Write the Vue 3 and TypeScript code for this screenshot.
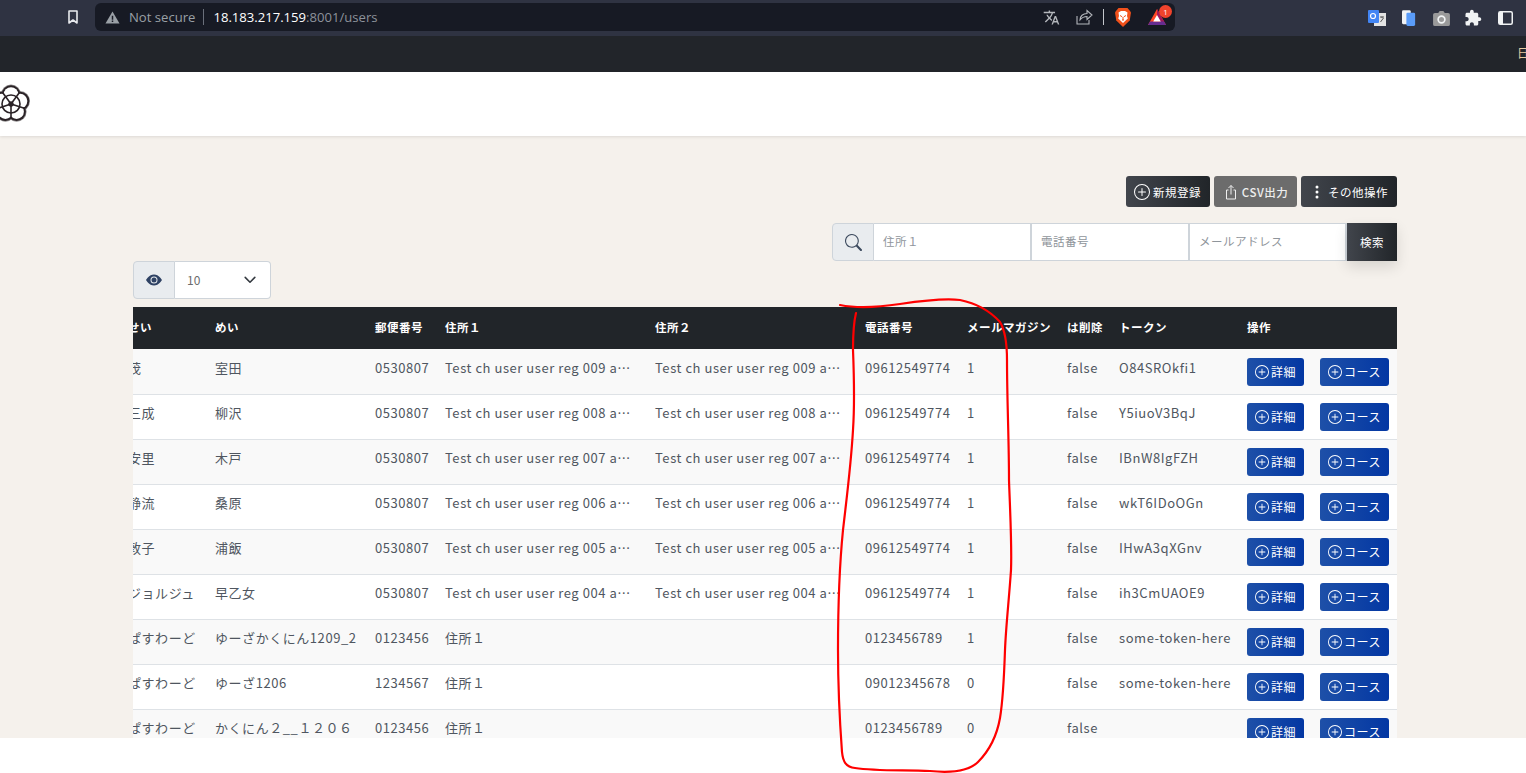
<template>
  <div class="page">
    <div class="browser-bar">
      <svg class="bookmark" viewBox="0 0 16 16" width="16" height="16"><path d="M4 2h8v12l-4-3-4 3z" fill="none" stroke="#e8eaed" stroke-width="1.6" stroke-linejoin="round" /></svg>
      <div class="omnibox">
        <svg viewBox="0 0 16 16" width="15" height="15"><path d="M8 1.5 15.5 14.5H.5zM7.2 6v4.4h1.6V6zM7.2 11.2v1.6h1.6v-1.6z" fill="#9aa0a6" fill-rule="evenodd" /></svg>
        <span class="not-secure">Not secure</span>
        <span class="omni-line"></span>
        <span class="url">18.183.217.159<span class="url-dim">:8001/users</span></span>
        <div class="omni-right">
          <svg viewBox="0 0 24 24" width="17" height="17"><path fill="#b4b7bc" d="M12.87 15.07l-2.54-2.51.03-.03c1.74-1.94 2.98-4.17 3.71-6.53H17V4h-7V2H8v2H1v1.99h11.17C11.5 7.92 10.44 9.75 9 11.35 8.07 10.32 7.3 9.19 6.69 8h-2c.73 1.63 1.73 3.17 2.98 4.56l-5.09 5.02L4 19l5-5 3.11 3.11.76-2.04zM18.5 10h-2L12 22h2l1.12-3h4.75L21 22h2l-4.5-12zm-2.62 7l1.62-4.33L19.12 17h-3.24z" /></svg>
          <svg viewBox="0 0 18 18" width="18" height="18" class="share"><path d="M2 8v8h12v-4M5 12c0-4 3-6.500 7-6.500V2.500l5 4.500-5 4.500V8.500c-3 0-5 1-7 3.500z" fill="none" stroke="#b4b7bc" stroke-width="1.100" /></svg>
          <span class="omni-line tall"></span>
          <svg viewBox="0 0 16 19" width="16" height="19" class="lion">
            <path d="M3.500 0h9L15 3l1 1.500-1.300 8L8 19 1.300 12.500 0 4.500 1 3z" fill="#f1511b" />
            <path d="M3.500 4.500 6 3h4l2.500 1.500L12 8l.8 2.500L8 15l-4.800-4.500L4 8z" fill="#fff" />
            <path d="M5 7.500 7.200 8.800M11 7.500 8.800 8.800M7 12h2M8 9v3" stroke="#f1511b" stroke-width="1" fill="none" />
          </svg>
          <div class="bat">
            <svg viewBox="0 0 18 16" width="18" height="16">
              <path d="M9 0 18 16H0z" fill="#ff4724" />
              <path d="M9 0 18 16H14L9 7z" fill="#a3195b" />
              <path d="M0 16H18L16 12.500H2z" fill="#662d91" />
              <path d="M9 6 12.800 12.500H5.200z" fill="#fff" />
            </svg>
            <span class="bat-badge">1</span>
          </div>
        </div>
      </div>
      <div class="ext-icons">
        <span class="ext">
          <svg viewBox="0 0 18 18" width="18" height="18">
            <rect x="6" y="4" width="12" height="13" fill="#e3e3e3" />
            <rect x="0" y="1" width="11" height="13" rx="1" fill="#4285f4" />
            <circle cx="5" cy="7" r="2.500" fill="none" stroke="#fff" stroke-width="1.200" />
            <path d="M12 8h4M14 7.500v1.500M12.500 13l3-4" stroke="#555" stroke-width="1" />
          </svg>
        </span>
        <span class="ext">
          <svg viewBox="0 0 16 18" width="14" height="16">
            <rect x="0" y="0" width="10" height="16" rx="1.500" fill="#f1f3f4" />
            <rect x="5" y="3" width="10" height="15" rx="1.500" fill="#5a9cf8" />
          </svg>
        </span>
        <span class="ext">
          <svg viewBox="0 0 18 16" width="17" height="15">
            <path d="M5.500 2 7 0h4l1.500 2H16a2 2 0 0 1 2 2v10a2 2 0 0 1-2 2H2a2 2 0 0 1-2-2V4a2 2 0 0 1 2-2z" fill="#9a9a9a" />
            <circle cx="9" cy="9" r="3.600" fill="none" stroke="#f1f3f4" stroke-width="1.800" />
          </svg>
        </span>
        <span class="ext">
          <svg viewBox="0 0 24 24" width="18" height="18"><path fill="#f1f3f4" d="M20.500 11H19V7c0-1.100-.9-2-2-2h-4V3.500C13 2.120 11.880 1 10.500 1S8 2.120 8 3.500V5H4c-1.100 0-1.990.9-1.990 2v3.800H3.500c1.490 0 2.700 1.210 2.700 2.700s-1.210 2.700-2.700 2.700H2V20c0 1.100.9 2 2 2h3.800v-1.500c0-1.490 1.210-2.700 2.700-2.700 1.490 0 2.700 1.210 2.700 2.700V22H17c1.100 0 2-.9 2-2v-4h1.500c1.380 0 2.500-1.120 2.500-2.500S21.880 11 20.500 11z" /></svg>
        </span>
        <span class="ext">
          <svg viewBox="0 0 15 14" width="15" height="14">
            <rect x=".75" y=".75" width="13.500" height="12.500" rx="1.500" fill="none" stroke="#f1f3f4" stroke-width="1.500" />
            <rect x="1" y="1" width="4" height="12" fill="#f1f3f4" />
          </svg>
        </span>
      </div>
    </div>

    <div class="bookmarks-bar"><span class="bookmark-glyph">日</span></div>

    <header class="app-header">
      <svg class="logo" viewBox="0 0 40 40" width="40" height="40">
        <!-- scalloped outline: grey halo, dark ring, then white to hide the overlaps -->
        <g fill="#8d8a8b">
          <circle v-for="p in petals" :key="p.x" :cx="p.x" :cy="p.y" r="10" />
        </g>
        <g fill="#2a2226">
          <circle v-for="p in petals" :key="p.x" :cx="p.x" :cy="p.y" r="9.300" />
        </g>
        <g fill="#fff">
          <circle v-for="p in petals" :key="p.x" :cx="p.x" :cy="p.y" r="7.300" />
        </g>
        <g fill="none" stroke="#2a2226" stroke-width="1.600">
          <circle cx="20" cy="20" r="9" />
          <path v-for="l in petalLines" :key="l" :d="l" />
        </g>
        <circle cx="20" cy="20" r="2.600" fill="#2a2226" />
      </svg>
    </header>

    <main class="content">
      <div class="actions">
        <button class="btn-dark btn-new">
          <svg viewBox="0 0 16 16" width="16" height="16" fill="currentColor"><path d="M8 15A7 7 0 1 1 8 1a7 7 0 0 1 0 14zm0 1A8 8 0 1 0 8 0a8 8 0 0 0 0 16z" /><path d="M8 4a.5.5 0 0 1 .5.5v3h3a.5.5 0 0 1 0 1h-3v3a.5.5 0 0 1-1 0v-3h-3a.5.5 0 0 1 0-1h3v-3A.5.5 0 0 1 8 4z" /></svg>
          新規登録
        </button>
        <button class="btn-dark btn-muted">
          <svg viewBox="0 0 16 16" width="16" height="16" fill="none" stroke="currentColor"><path d="M5.500 6H3.500v9h9V6h-2M8 10.500V1.500M5.500 4 8 1.500 10.500 4" /></svg>
          CSV出力
        </button>
        <button class="btn-dark btn-more">
          <svg viewBox="0 0 16 16" width="16" height="16" fill="currentColor"><path d="M9.500 13a1.500 1.500 0 1 1-3 0 1.500 1.500 0 0 1 3 0zm0-5a1.500 1.500 0 1 1-3 0 1.500 1.500 0 0 1 3 0zm0-5a1.500 1.500 0 1 1-3 0 1.500 1.500 0 0 1 3 0z" /></svg>
          その他操作
        </button>
      </div>

      <div class="search-row">
        <div class="search-group">
          <span class="addon addon-search">
            <svg viewBox="0 0 16 16" width="17" height="17" fill="#3c4a5e"><path d="M11.742 10.344a6.500 6.500 0 1 0-1.397 1.398h-.001c.03.04.062.078.098.115l3.850 3.850a1 1 0 0 0 1.415-1.414l-3.850-3.850a1.007 1.007 0 0 0-.115-.1zM12 6.500a5.500 5.500 0 1 1-11 0 5.500 5.500 0 0 1 11 0z" /></svg>
          </span>
          <input class="search-input" placeholder="住所１" />
          <input class="search-input" placeholder="電話番号" />
          <input class="search-input last" placeholder="メールアドレス" />
          <button class="btn-search">検索</button>
        </div>
      </div>

      <div class="per-page">
        <span class="addon addon-eye">
          <svg viewBox="0 0 16 16" width="16" height="16" fill="#2f4264"><path d="M10.500 8a2.500 2.500 0 1 1-5 0 2.500 2.500 0 0 1 5 0z" /><path d="M0 8s3-5.500 8-5.500S16 8 16 8s-3 5.500-8 5.500S0 8 0 8zm8 3.500a3.500 3.500 0 1 0 0-7 3.500 3.500 0 0 0 0 7z" /></svg>
        </span>
        <div class="per-page-select">
          <span class="per-page-value">10</span>
          <svg viewBox="0 0 16 16" width="14" height="14" fill="none" stroke="#343a40" stroke-width="1.800" stroke-linecap="round" stroke-linejoin="round"><path d="m2.500 5 5.500 5.500L13.500 5" /></svg>
        </div>
      </div>

      <div class="table-wrap">
        <table class="users">
          <colgroup>
            <col v-for="w in colWidths" :key="w.id" :style="{ width: w.px + 'px' }" />
          </colgroup>
          <thead>
            <tr>
              <th v-for="h in headers" :key="h">{{ h }}</th>
            </tr>
          </thead>
          <tbody>
            <tr v-for="u in users" :key="u.mei">
              <td>{{ u.sei }}</td>
              <td>{{ u.mei }}</td>
              <td>{{ u.zip }}</td>
              <td class="clip">{{ u.addr1 }}</td>
              <td class="clip">{{ u.addr2 }}</td>
              <td>{{ u.tel }}</td>
              <td>{{ u.mag }}</td>
              <td>false</td>
              <td>{{ u.token }}</td>
              <td>
                <div class="row-actions">
                  <button class="btn-blue">
                    <svg viewBox="0 0 16 16" width="14" height="14" fill="currentColor"><path d="M8 15A7 7 0 1 1 8 1a7 7 0 0 1 0 14zm0 1A8 8 0 1 0 8 0a8 8 0 0 0 0 16z" /><path d="M8 4a.5.5 0 0 1 .5.5v3h3a.5.5 0 0 1 0 1h-3v3a.5.5 0 0 1-1 0v-3h-3a.5.5 0 0 1 0-1h3v-3A.5.5 0 0 1 8 4z" /></svg>
                    詳細
                  </button>
                  <button class="btn-blue">
                    <svg viewBox="0 0 16 16" width="14" height="14" fill="currentColor"><path d="M8 15A7 7 0 1 1 8 1a7 7 0 0 1 0 14zm0 1A8 8 0 1 0 8 0a8 8 0 0 0 0 16z" /><path d="M8 4a.5.5 0 0 1 .5.5v3h3a.5.5 0 0 1 0 1h-3v3a.5.5 0 0 1-1 0v-3h-3a.5.5 0 0 1 0-1h3v-3A.5.5 0 0 1 8 4z" /></svg>
                    コース
                  </button>
                </div>
              </td>
            </tr>
          </tbody>
        </table>
      </div>
    </main>

    <!-- hand drawn marker on top of the screenshot -->
    <svg class="marker" viewBox="0 0 1526 773" width="1526" height="773" fill="none" stroke="#f00" stroke-width="2.200" stroke-linecap="round" stroke-linejoin="round">
      <path d="M840 305C860 309 880 307 900 304C920 301 945 298 960 300C975 303 990 311 1000 322C1006 332 1007 345 1007 360C1007 400 1009 440 1009 480C1010 510 1012 545 1011 570C1009 600 1006 625 1005 650C1004 680 1003 700 1000 718C997 735 990 750 978 762C968 772 950 773 930 771C900 770 875 771 855 768C846 767 843 762 842 752C840 725 838 690 838 650C838 610 840 560 843 530C847 495 851 465 853 430C855 400 854 375 853 350C853 338 853 325 856 313" />
    </svg>
  </div>
</template>

<script setup lang="ts">
interface User {
  sei: string
  mei: string
  zip: string
  addr1: string
  addr2: string
  tel: string
  mag: number
  token: string
}

const headers = ['せい', 'めい', '郵便番号', '住所１', '住所２', '電話番号', 'メールマガジン', 'は削除', 'トークン', '操作']

const colWidths = [87, 160, 70, 210, 210, 102, 100, 52, 128, 158].map((px, id) => ({ id, px }))

const reg = (n: string) => `Test ch user user reg ${n} address`

const users: User[] = [
  { sei: '茂', mei: '室田', zip: '0530807', addr1: reg('009'), addr2: reg('009'), tel: '09612549774', mag: 1, token: 'O84SROkfi1' },
  { sei: '三成', mei: '柳沢', zip: '0530807', addr1: reg('008'), addr2: reg('008'), tel: '09612549774', mag: 1, token: 'Y5iuoV3BqJ' },
  { sei: '安里', mei: '木戸', zip: '0530807', addr1: reg('007'), addr2: reg('007'), tel: '09612549774', mag: 1, token: 'IBnW8IgFZH' },
  { sei: '静流', mei: '桑原', zip: '0530807', addr1: reg('006'), addr2: reg('006'), tel: '09612549774', mag: 1, token: 'wkT6IDoOGn' },
  { sei: '敦子', mei: '浦飯', zip: '0530807', addr1: reg('005'), addr2: reg('005'), tel: '09612549774', mag: 1, token: 'IHwA3qXGnv' },
  { sei: 'ジョルジュ', mei: '早乙女', zip: '0530807', addr1: reg('004'), addr2: reg('004'), tel: '09612549774', mag: 1, token: 'ih3CmUAOE9' },
  { sei: 'ぱすわーど', mei: 'ゆーざかくにん1209_2', zip: '0123456', addr1: '住所１', addr2: '', tel: '0123456789', mag: 1, token: 'some-token-here' },
  { sei: 'ぱすわーど', mei: 'ゆーざ1206', zip: '1234567', addr1: '住所１', addr2: '', tel: '09012345678', mag: 0, token: 'some-token-here' },
  { sei: 'ぱすわーど', mei: 'かくにん２__１２０６', zip: '0123456', addr1: '住所１', addr2: '', tel: '0123456789', mag: 0, token: '' },
]

// five petals around the logo centre
const petals = [0, 1, 2, 3, 4].map((i) => {
  const a = ((-90 + i * 72) * Math.PI) / 180
  return { x: 20 + 9.5 * Math.cos(a), y: 20 + 9.5 * Math.sin(a) }
})

const petalLines = [0, 1, 2, 3, 4].map((i) => {
  const a = ((-54 + i * 72) * Math.PI) / 180
  return `M20 20L${20 + 14 * Math.cos(a)} ${20 + 14 * Math.sin(a)}`
})
</script>

<style>
html,
body {
  margin: 0;
  background: #fff;
  overflow: hidden;
}
</style>

<style scoped>
.page {
  position: relative;
  width: 1526px;
  height: 773px;
  overflow: hidden;
  background: #fff;
  font-family: "Noto Sans CJK JP", "Noto Sans", sans-serif;
}

/* browser chrome */
.browser-bar {
  display: flex;
  align-items: flex-start;
  height: 36px;
  box-sizing: border-box;
  padding: 3px 5px 0 65px;
  background: #2f3342;
}

.bookmark {
  margin: 6px 14px 0 0;
}

.omnibox {
  display: flex;
  align-items: center;
  width: 1080px;
  height: 28px;
  box-sizing: border-box;
  padding: 0 9px 0 10px;
  background: #171a24;
  border-radius: 6px;
  font-family: "Open Sans", sans-serif;
  font-size: 13.1px;
}

.not-secure {
  margin-left: 9px;
  color: #9aa0a6;
}

.omni-line {
  width: 1px;
  height: 16px;
  margin: 0 9px 0 8px;
  background: #6a6f7a;
}

.url {
  color: #fff;
}

.url-dim {
  color: #8d929b;
}

.omni-right {
  display: flex;
  align-items: center;
  margin-left: auto;
}

.share {
  margin-left: 15px;
}

.omni-line.tall {
  margin: 0 11px 0 10px;
  background: #c4c7cc;
}

.bat {
  position: relative;
  display: flex;
  margin-left: 17px;
}

.bat-badge {
  position: absolute;
  top: -4px;
  right: -6px;
  width: 13px;
  height: 13px;
  border-radius: 50%;
  background: #f0432c;
  color: #fff;
  font-size: 8px;
  line-height: 13px;
  text-align: center;
}

.ext-icons {
  display: flex;
  margin-left: auto;
}

.ext {
  display: flex;
  align-items: center;
  justify-content: center;
  width: 32px;
  height: 30px;
}

.bookmarks-bar {
  display: flex;
  justify-content: flex-end;
  height: 36px;
  box-sizing: border-box;
  background: #22252a;
  overflow: hidden;
}

.bookmark-glyph {
  margin: 6px -3px 0 0;
  color: #e8c9a0;
  font-size: 12px;
  line-height: 22px;
}

/* app */
.app-header {
  position: relative;
  z-index: 1;
  height: 64px;
  background: #fff;
  box-shadow: 0 1px 3px rgba(0, 0, 0, 0.1);
}

.logo {
  display: block;
  margin-left: -9px;
  padding-top: 12px;
}

.content {
  height: 602px;
  box-sizing: border-box;
  padding: 40px 129px 0 133px;
  background: #f5f1ec;
  overflow: hidden;
}

.actions {
  display: flex;
  justify-content: flex-end;
  gap: 4px;
}

.btn-dark {
  display: flex;
  align-items: center;
  gap: 3px;
  height: 31px;
  padding: 0 8px;
  border: 0;
  border-radius: 3px;
  background: linear-gradient(90deg, #41454c, #212529);
  color: #fff;
  font-family: inherit;
  font-size: 11.5px;
  letter-spacing: 0.5px;
  white-space: nowrap;
}

.btn-new {
  width: 84px;
}

.btn-muted {
  justify-content: center;
  width: 83px;
  padding: 0;
  background: #6c6c6c;
  color: #eee;
  font-weight: 500;
  gap: 3px;
}

.btn-more {
  width: 96px;
  gap: 3px;
}

.search-row {
  display: flex;
  justify-content: flex-end;
  margin-top: 16px;
}

.search-group {
  display: flex;
  height: 38px;
}

.addon {
  display: flex;
  align-items: center;
  justify-content: center;
  width: 42px;
  box-sizing: border-box;
  background: #e9ecef;
  border: 1px solid #ced4da;
  border-radius: 4px 0 0 4px;
}

.search-input {
  width: 158px;
  box-sizing: border-box;
  padding: 0 9px 2px;
  background: #fff;
  border: 1px solid #ced4da;
  border-left-width: 0;
  border-right-width: 2px;
  border-radius: 0;
  font-family: inherit;
  font-size: 11.5px;
  letter-spacing: 0.5px;
  outline: none;
}

.search-input.last {
  width: 157px;
}

.search-input::placeholder {
  color: #8f959b;
  opacity: 1;
}

.btn-search {
  width: 50px;
  border: 0;
  background: linear-gradient(90deg, #41454c, #212529);
  box-shadow: 0 6px 14px rgba(0, 0, 0, 0.12);
  color: #fff;
  font-family: inherit;
  font-size: 11.5px;
  letter-spacing: 0.5px;
}

.per-page {
  display: flex;
  width: 138px;
  height: 38px;
}

.addon-eye {
  flex: none;
  width: 42px;
}

.per-page-select {
  display: flex;
  flex: 1;
  align-items: center;
  justify-content: space-between;
  box-sizing: border-box;
  padding: 0 13px 0 12px;
  background: #fff;
  border: 1px solid #ced4da;
  border-left: 0;
  border-radius: 0 4px 4px 0;
  color: #6c6c6c;
  font-size: 12px;
}

.per-page-value {
  margin-top: -2px;
}

.table-wrap {
  margin-top: 8px;
  overflow: hidden;
}

.users {
  width: 1277px;
  margin-left: -13px;
  border-collapse: separate;
  border-spacing: 0;
  table-layout: fixed;
  font-size: 13px;
  letter-spacing: 0.55px;
  color: #4f5660;
}

.users th {
  height: 42px;
  padding: 0 8px 2px;
  box-sizing: border-box;
  background: #212529;
  color: #fff;
  font-size: 11.5px;
  font-weight: 700;
  letter-spacing: 0.5px;
  text-align: left;
  white-space: nowrap;
}

.users td {
  height: 45px;
  box-sizing: border-box;
  padding: 8px 8px 8px;
  border-top: 1px solid #dee2e6;
  line-height: 20px;
  vertical-align: top;
  white-space: nowrap;
}

.users tbody tr:nth-child(odd) td {
  background: #f9f9f9;
}

.users tbody tr:nth-child(even) td {
  background: #fff;
}

.users tbody tr:first-child td {
  padding-top: 9px;
  border-top: 0;
}

.users td.clip {
  padding-right: 13px;
  overflow: hidden;
  text-overflow: ellipsis;
}

.row-actions {
  display: flex;
  gap: 16px;
}

.btn-blue {
  display: flex;
  align-items: center;
  gap: 2px;
  height: 28px;
  padding: 0 8px 1px;
  border: 0;
  border-radius: 3px;
  background: linear-gradient(90deg, #1e50a8, #0337a3);
  color: #fff;
  font-family: inherit;
  font-size: 12px;
  letter-spacing: 0.5px;
  white-space: nowrap;
}

.marker {
  position: absolute;
  top: 0;
  left: 0;
  z-index: 2;
  pointer-events: none;
}
</style>
